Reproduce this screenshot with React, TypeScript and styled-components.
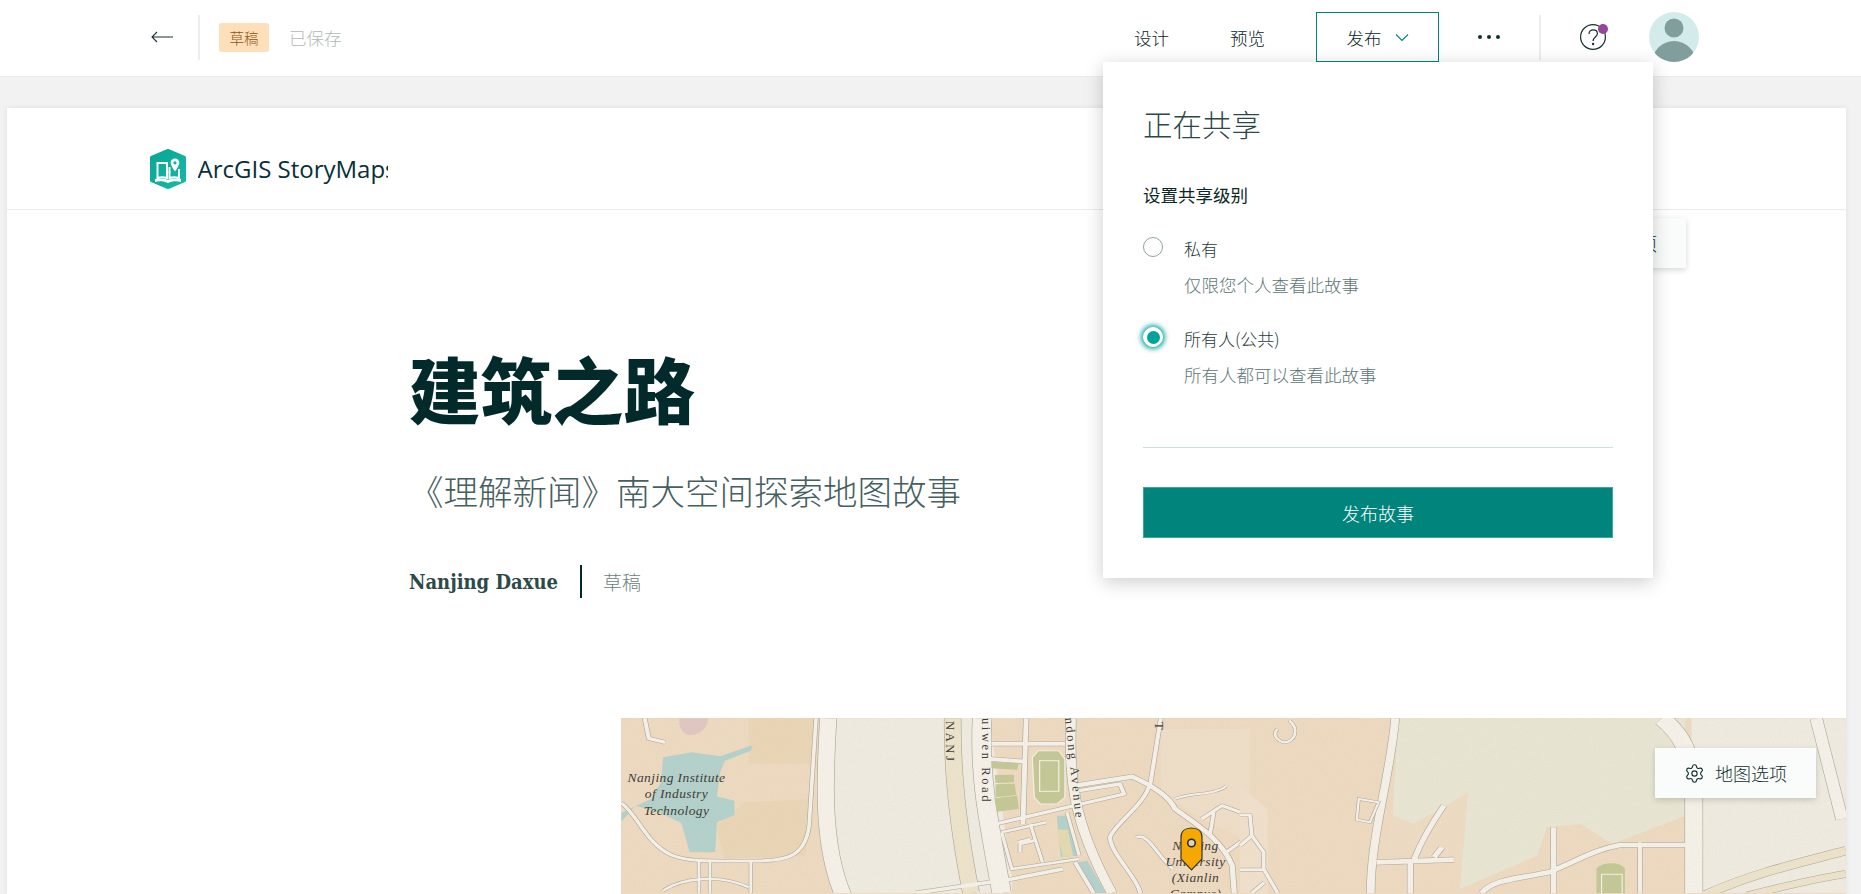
import React from 'react'
import styled, { createGlobalStyle } from 'styled-components'
import { Settings } from 'lucide-react'

const GlobalStyle = createGlobalStyle`
  html, body {
    margin: 0;
    padding: 0;
    height: 100%;
    overflow: hidden;
    background: #f2f2f2;
  }
  * {
    box-sizing: border-box;
  }
`

const SANS = `"Noto Sans CJK SC", "Open Sans", sans-serif`
const SERIF = `"Liberation Serif", "Noto Sans CJK SC", serif`

const Page = styled.div`
  position: relative;
  width: 1861px;
  height: 894px;
  overflow: hidden;
  display: flex;
  flex-flow: column nowrap;
  font-family: ${SANS};
  color: #1f3b3a;
`

const TopBar = styled.div`
  flex: 0 0 77px;
  display: flex;
  align-items: center;
  padding: 0 162px 2px 151px;
  background: #fff;
  border-bottom: 1px solid #ececec;
`
const BackButton = styled.div`
  width: 22px;
  height: 12px;
  display: flex;
`
const BarDivider = styled.div`
  width: 2px;
  height: 45px;
  margin-left: 25px;
  background: #ebeeee;
`
const DraftBadge = styled.div`
  width: 50px;
  height: 29px;
  margin-left: 19px;
  display: flex;
  align-items: center;
  justify-content: center;
  border-radius: 3px;
  background: #fddfba;
  color: #8f5313;
  font-size: 14.5px;
  font-weight: 300;
`
const SavedText = styled.div`
  margin-left: 20px;
  font-size: 17.5px;
  font-weight: 300;
  color: #b2b9b7;
`
const Actions = styled.div`
  margin-left: auto;
  display: flex;
  align-items: center;
  height: 100%;
`
const ActionLink = styled.div<{ $gap: number }>`
  margin-right: ${(p) => p.$gap}px;
  font-size: 17.5px;
  font-weight: 300;
  color: #0b2726;
`
const PublishButton = styled.div`
  width: 123px;
  height: 50px;
  display: flex;
  align-items: center;
  justify-content: center;
  gap: 13px;
  border: 1px solid #00857d;
  font-size: 17.5px;
  font-weight: 300;
  color: #0b2726;
`
const MoreDots = styled.div`
  width: 22px;
  margin-left: 39px;
  display: flex;
  justify-content: space-between;
`
const Dot = styled.span`
  width: 4px;
  height: 4px;
  border-radius: 50%;
  background: #14302f;
`
const ActionDivider = styled(BarDivider)`
  margin-left: 39px;
`
const HelpWrap = styled.div`
  position: relative;
  width: 26px;
  height: 26px;
  margin-left: 39px;
`
const HelpDot = styled.span`
  position: absolute;
  top: 0;
  right: -2px;
  width: 10px;
  height: 10px;
  border-radius: 50%;
  background: #93479b;
`
const Avatar = styled.div`
  width: 50px;
  height: 50px;
  margin-left: 43px;
  overflow: hidden;
  border-radius: 50%;
`

const Canvas = styled.div`
  flex: 1;
  min-height: 0;
  padding: 31px 15px 0 7px;
  display: flex;
`
const Card = styled.div`
  flex: 1;
  min-width: 0;
  display: flex;
  flex-flow: column nowrap;
  background: #fff;
  box-shadow: 0 0 6px rgba(0, 0, 0, 0.08);
`
const CardHeader = styled.div`
  flex: 0 0 102px;
  display: flex;
  align-items: center;
  gap: 12px;
  padding: 20px 0 0 142.5px;
  border-bottom: 1px solid #ebebeb;
`
const Brand = styled.div`
  width: 190px;
  overflow: hidden;
  white-space: nowrap;
  font-family: 'Open Sans', sans-serif;
  font-size: 24px;
  color: #07303a;
`
const Hero = styled.div`
  padding: 132px 0 0 402px;
`
const Title = styled.h1`
  margin: 0;
  font-size: 71.5px;
  line-height: 90px;
  font-weight: 900;
  color: #032a2a;
`
const Subtitle = styled.div`
  margin-top: 39px;
  font-family: ${SERIF};
  font-size: 34.5px;
  line-height: 44px;
  font-weight: 300;
  color: #45605f;
`
const Byline = styled.div`
  margin-top: 50px;
  height: 33px;
  display: flex;
  align-items: center;
`
const Author = styled.div`
  font-family: 'DejaVu Serif', serif;
  font-stretch: condensed;
  font-size: 20px;
  font-weight: 700;
  color: #2d4a49;
`
const BylineRule = styled.div`
  width: 2px;
  height: 33px;
  margin: 0 21px 0 22px;
  background: #032a2a;
`
const Status = styled.div`
  font-family: ${SERIF};
  font-size: 19px;
  font-weight: 300;
  color: #6b8280;
`
const MapFrame = styled.div`
  position: relative;
  flex: 1;
  min-height: 0;
  margin: 120px 0 0 614px;
  overflow: hidden;
  background: #ecd9bf;

  svg {
    display: block;
  }
`
const OptionsButton = styled.div`
  position: absolute;
  width: 161px;
  height: 50px;
  display: flex;
  align-items: center;
  gap: 10px;
  padding-left: 29px;
  background: #fafcfb;
  box-shadow: 0 2px 6px rgba(0, 0, 0, 0.16);
  font-size: 18px;
  font-weight: 300;
  color: #14302f;
`
const MapOptions = styled(OptionsButton)`
  top: 30px;
  right: 30px;
`
const HiddenOptions = styled(OptionsButton)`
  top: 218px;
  left: 1525px;
`

const Popover = styled.div`
  position: absolute;
  left: 1103px;
  top: 62px;
  width: 550px;
  height: 516px;
  padding: 0 40px;
  background: #fff;
  box-shadow: 0 4px 18px rgba(0, 0, 0, 0.2);
`
const PopTitle = styled.div`
  margin-top: 39px;
  font-size: 29.5px;
  line-height: 44px;
  font-weight: 300;
  color: #2c4847;
`
const PopLabel = styled.div`
  margin-top: 37px;
  font-size: 17.5px;
  line-height: 26px;
  font-weight: 400;
  color: #0b2726;
`
const Option = styled.div`
  display: grid;
  grid-template-columns: 20px 1fr;
  column-gap: 21px;
  margin-top: 29px;
`
const Radio = styled.div<{ $checked?: boolean }>`
  width: 20px;
  height: 20px;
  border-radius: 50%;
  background: #fff;
  border: 1px solid ${(p) => (p.$checked ? '#fff' : '#8da5a2')};
  display: flex;
  align-items: center;
  justify-content: center;
  ${(p) => (p.$checked ? 'box-shadow: 0 0 5px 2px #1ba8a0;' : '')}
`
const RadioMark = styled.span`
  width: 13px;
  height: 13px;
  border-radius: 50%;
  background: #00a39a;
`
const OptionText = styled.div`
  display: flex;
  flex-flow: column nowrap;
  gap: 9px;
`
const OptionName = styled.div`
  margin-top: -1px;
  margin-bottom: 1px;
  font-size: 17px;
  line-height: 26px;
  font-weight: 300;
  color: #1f3b3a;
`
const OptionDesc = styled.div`
  font-size: 17.5px;
  line-height: 26px;
  font-weight: 300;
  color: #5c7674;
`
const PopDivider = styled.div`
  height: 1px;
  margin-top: 59px;
  background: #c9e2de;
`
const PublishStory = styled.div`
  height: 51px;
  margin-top: 39px;
  display: flex;
  align-items: center;
  justify-content: center;
  background: #00847c;
  border: 1px solid #3aa8a0;
  font-size: 18px;
  font-weight: 300;
  color: #fff;
`

const ArrowIcon = () => (
  <svg width="22" height="12" viewBox="0 0 22 12" fill="none" stroke="#14302f" strokeWidth="1.1">
    <path d="M1 6h21M6 1 1 6l5 5" />
  </svg>
)

const ChevronIcon = () => (
  <svg width="14" height="9" viewBox="0 0 14 9" fill="none" stroke="#00857d" strokeWidth="1.1">
    <path d="M1 1.500l6 6 6-6" />
  </svg>
)

const HelpIcon = () => (
  <svg width="26" height="26" viewBox="0 0 26 26" fill="none" stroke="#14302f" strokeWidth="1.2">
    <circle cx="13" cy="13" r="12.400" />
    <path d="M9 10c0-2.600 1.800-4.200 4.200-4.200 2.400 0 4.200 1.600 4.200 3.800 0 3.400-4.300 3.400-4.300 7.400" />
    <circle cx="13.100" cy="20" r="0.600" />
  </svg>
)

const AvatarIcon = () => (
  <svg width="50" height="50" viewBox="0 0 50 50">
    <rect width="50" height="50" fill="#d3ebeb" />
    <circle cx="25" cy="16" r="9.500" fill="#819e9d" />
    <circle cx="25" cy="51" r="22" fill="#819e9d" />
  </svg>
)

const LogoIcon = () => (
  <svg width="36" height="40" viewBox="0 0 36 40">
    <defs>
      <linearGradient id="logoFill" x1="0" x2="1" y1="0" y2="1">
        <stop offset="0" stopColor="#0aa596" />
        <stop offset="1" stopColor="#17b9a7" />
      </linearGradient>
    </defs>
    <path
      d="M18 1.500l16.500 7v23L18 38.500 1.500 31.500v-23z"
      fill="url(#logoFill)"
      stroke="url(#logoFill)"
      strokeWidth="3"
      strokeLinejoin="round"
    />
    <path d="M7.500 14h9.500v15c-3-1-6.500-1-9.500 0zM19.500 18v11c3-1 6.500-1 9.500 0v-9" fill="none" stroke="#fff" strokeWidth="2" />
    <path d="M5 30v3c4-1 9-1 13 1 4-2 9-2 13-1v-3c-4-.8-9-.8-13 1-4-1.800-9-1.800-13-1z" fill="#fff" />
    <path d="M25 9.500c-2.600 0-4.300 1.900-4.300 4.200 0 2.900 4.300 8.800 4.300 8.800s4.300-5.900 4.300-8.800c0-2.300-1.700-4.200-4.300-4.200z" fill="#fff" />
    <circle cx="25" cy="13.800" r="1.600" fill="#10ae9d" />
  </svg>
)

const GearIcon = () => <Settings size={21} strokeWidth={1.3} color="#14302f" />

// traced from the basemap crops, drawn in the crop's own coordinates
const leftRoads = [
  { d: 'M535 28C528 180 515 400 572 560', w: 40 },
  { d: 'M85 28L95 88L135 100', w: 10 },
  { d: 'M28 282C70 320 85 400 150 438C190 458 240 456 330 456C430 456 478 450 488 350L505 28', w: 9 },
  { d: 'M218 456V552M245 456V552M345 456V552', w: 7 },
  { d: 'M130 545C180 505 270 495 340 535', w: 7 },
  { d: 'M912 28C905 200 925 320 960 552', w: 46 },
  { d: 'M840 28C838 200 860 400 885 552', w: 40, beige: true },
  { d: 'M935 104H1115M930 150L1020 158', w: 12 },
  { d: 'M1020 28L1012 345', w: 12 },
  { d: 'M1130 28C1126 200 1130 330 1230 552', w: 24 },
  { d: 'M1140 230L1280 203C1320 225 1370 260 1385 300C1430 340 1500 390 1525 470L1530 552', w: 13 },
  { d: 'M945 345L1260 255L1250 225L1150 245', w: 10 },
  { d: 'M960 370L1025 352L1070 340M960 370L985 480L1150 450M1030 345L1060 460M1120 310L1150 440', w: 8 },
  { d: 'M1040 395L1005 405V430M1000 400L1030 390', w: 8 },
  { d: 'M985 510L1110 480M900 525L985 510M750 552L900 525', w: 11 },
  { d: 'M1140 460L1185 552', w: 10 },
  { d: 'M1350 28L1325 220C1310 290 1240 340 1225 385C1230 440 1290 500 1300 552', w: 10 },
  { d: 'M1290 385C1320 370 1340 440 1380 480', w: 8 },
  { d: 'M1385 270C1420 250 1480 260 1510 232', w: 6 },
  { d: 'M1450 330L1500 290L1568 320M1480 310L1470 380M1510 430L1568 380', w: 9 },
]

const rightRoads = [
  { d: 'M392 28C380 200 330 380 330 552', w: 20 },
  { d: 'M1065 28C1110 70 1145 130 1146 260V552', w: 44 },
  { d: 'M1455 28L1520 330', w: 30 },
  { d: 'M345 460L540 452M430 460V552M440 450C460 390 480 350 515 290M490 445L510 415', w: 14 },
  { d: 'M0 318H25L30 380L60 430V480L95 552M0 410L30 380M0 482H60M30 552L62 520', w: 9 },
  { d: 'M125 35C150 60 140 100 110 100C85 90 85 70 95 60', w: 7 },
  { d: 'M792 355V552', w: 14 },
  { d: 'M610 552C640 510 700 510 780 490C860 450 900 420 960 408H1125', w: 14 },
  { d: 'M1010 400V552', w: 10 },
  { d: 'M1170 560C1300 490 1420 460 1530 425', w: 24, beige: true },
  { d: 'M1280 560C1380 530 1450 510 1530 495', w: 20, beige: true },
]

const Roads = ({ items }: { items: { d: string; w: number; beige?: boolean }[] }) => (
  <g fill="none" strokeLinejoin="round" strokeLinecap="butt">
    {items.map((road, i) => (
      <path key={i} d={road.d} stroke="#aaa69a" strokeWidth={road.w + 3} />
    ))}
    {items.map((road, i) => (
      <path key={i} d={road.d} stroke={road.beige ? '#ebe2c9' : '#f4f0e7'} strokeWidth={road.w} />
    ))}
  </g>
)

const BaseMap = () => (
  <svg width="1225" height="175" viewBox="0 0 1225 175">
    <defs>
      <filter id="paper" x="0" y="0" width="100%" height="100%">
        <feTurbulence type="fractalNoise" baseFrequency="0.55" numOctaves="2" seed="4" />
        <feColorMatrix values="0 0 0 0 0.55  0 0 0 0 0.52  0 0 0 0 0.42  0 0 0 1.1 -0.45" />
      </filter>
    </defs>
    <rect width="1225" height="175" fill="#ecd9bf" />

    <g transform="translate(-11 -9) scale(0.408 0.3333)">
      <path d="M340 28H505L490 300L480 440L280 450L260 350L330 280L500 270V165H340Z" fill="#e9d5b6" />
      <path d="M170 28H240C242 60 212 82 192 78C175 74 168 50 170 28Z" fill="#e0c6c1" />
      <path
        d="M130 145L200 130L270 142L350 108L345 125L282 155L270 190L262 262L305 275V318L262 340L258 430H195L175 342L120 310L62 290L28 338V312L100 270L125 220Z"
        fill="#b3d0ca"
      />
      <path d="M512 28H1000L985 552H570Z" fill="#eeeadf" />
      <path d="M930 28H1568V552H990Z" fill="#ecd9bf" />
      <path d="M1350 60H1568V400L1450 330L1350 250Z" fill="#eeddc6" />
      <path d="M1095 320H1120L1145 440L1105 445Z" fill="#b3d0ca" />
      <path d="M1095 362H1122L1135 440L1110 445Z" fill="#e2d9ae" />
      <path d="M1148 460L1170 455L1215 552H1190Z" fill="#b3d0ca" />
      <Roads items={leftRoads} />
      <path
        d="M1035 145L1050 125H1100L1115 150V265L1095 285H1055L1040 265Z"
        fill="#c3c795"
        stroke="#f4f0e7"
        strokeWidth="3"
      />
      <rect x="1053" y="155" width="47" height="92" fill="none" stroke="#f4f0e7" strokeWidth="3" />
      <path d="M935 158L1002 162L998 182L935 178ZM943 198L990 197V220L945 222ZM945 226L992 224L996 258L945 265ZM942 268L998 260L1002 300L948 308Z" fill="#c3c795" />
    </g>

    <g transform="translate(619 -9) scale(0.396 0.3333)">
      <path d="M400 28H1125V320L940 405L860 345L775 355L750 440L555 540L575 250L520 290L440 345L385 320Z" fill="#e7e4d1" />
      <path d="M385 320L440 345L520 290L575 250L555 540L545 440H360Z" fill="#eddac2" />
      <path d="M1140 28H1530V552H1140Z" fill="#eeeadf" />
      <path d="M0 230L70 300V552H0Z" fill="#efdfca" />
      <Roads items={rightRoads} />
      <path d="M300 270L350 280L328 340L295 332Z" fill="none" stroke="#aaa69a" strokeWidth="9" />
      <path d="M300 270L350 280L328 340L295 332Z" fill="none" stroke="#f4f0e7" strokeWidth="6" />
      <path d="M900 480C910 460 960 455 972 480V552H900Z" fill="#c3c795" />
      <rect x="913" y="496" width="52" height="60" fill="none" stroke="#f4f0e7" strokeWidth="3" />
    </g>

    <rect width="1225" height="175" filter="url(#paper)" opacity="0.18" />

    <g fontFamily="Liberation Serif, serif" fill="#3f3d38">
      <g fontStyle="italic" fontSize="13.5" textAnchor="middle" letterSpacing="0.4">
        <text x="55.500" y="64">Nanjing Institute</text>
        <text x="55.500" y="80">of Industry</text>
        <text x="55.500" y="97">Technology</text>
        <text x="574.500" y="132">Nanjing</text>
        <text x="574.500" y="148">University</text>
        <text x="574.500" y="164">(Xianlin</text>
        <text x="574.500" y="180">Campus)</text>
      </g>
      <g fontSize="12.500" letterSpacing="2.600">
        <text transform="translate(325 3) rotate(90)">NANJ</text>
        <text transform="translate(361 0) rotate(90)">uiwen Road</text>
        <text transform="translate(444 0) rotate(84)">ndong Avenue</text>
        <text transform="translate(534 4) rotate(90)">T</text>
      </g>
      <path
        d="M570.500 110C577 110 581 113.500 581 119V141L570.500 152L560 141V119C560 113.500 564 110 570.500 110Z"
        fill="#f5a800"
        stroke="#3a3426"
        strokeWidth="1.200"
      />
      <circle cx="570.500" cy="125" r="3.800" fill="#d9d4c5" stroke="#2f2c25" strokeWidth="1.600" />
    </g>
  </svg>
)

const App = () => {
  return (
    <Page>
      <GlobalStyle />
      <TopBar>
        <BackButton>
          <ArrowIcon />
        </BackButton>
        <BarDivider />
        <DraftBadge>草稿</DraftBadge>
        <SavedText>已保存</SavedText>
        <Actions>
          <ActionLink $gap={61}>设计</ActionLink>
          <ActionLink $gap={51}>预览</ActionLink>
          <PublishButton>
            发布
            <ChevronIcon />
          </PublishButton>
          <MoreDots>
            <Dot />
            <Dot />
            <Dot />
          </MoreDots>
          <ActionDivider />
          <HelpWrap>
            <HelpIcon />
            <HelpDot />
          </HelpWrap>
          <Avatar>
            <AvatarIcon />
          </Avatar>
        </Actions>
      </TopBar>
      <Canvas>
        <Card>
          <CardHeader>
            <LogoIcon />
            <Brand>ArcGIS StoryMaps</Brand>
          </CardHeader>
          <Hero>
            <Title>建筑之路</Title>
            <Subtitle>《理解新闻》南大空间探索地图故事</Subtitle>
            <Byline>
              <Author>Nanjing Daxue</Author>
              <BylineRule />
              <Status>草稿</Status>
            </Byline>
          </Hero>
          <MapFrame>
            <BaseMap />
            <MapOptions>
              <GearIcon />
              地图选项
            </MapOptions>
          </MapFrame>
        </Card>
      </Canvas>
      <HiddenOptions>
        <GearIcon />
        地图选项
      </HiddenOptions>
      <Popover>
        <PopTitle>正在共享</PopTitle>
        <PopLabel>设置共享级别</PopLabel>
        <Option>
          <Radio />
          <OptionText>
            <OptionName>私有</OptionName>
            <OptionDesc>仅限您个人查看此故事</OptionDesc>
          </OptionText>
        </Option>
        <Option>
          <Radio $checked>
            <RadioMark />
          </Radio>
          <OptionText>
            <OptionName>所有人(公共)</OptionName>
            <OptionDesc>所有人都可以查看此故事</OptionDesc>
          </OptionText>
        </Option>
        <PopDivider />
        <PublishStory>发布故事</PublishStory>
      </Popover>
    </Page>
  )
}

export default App
